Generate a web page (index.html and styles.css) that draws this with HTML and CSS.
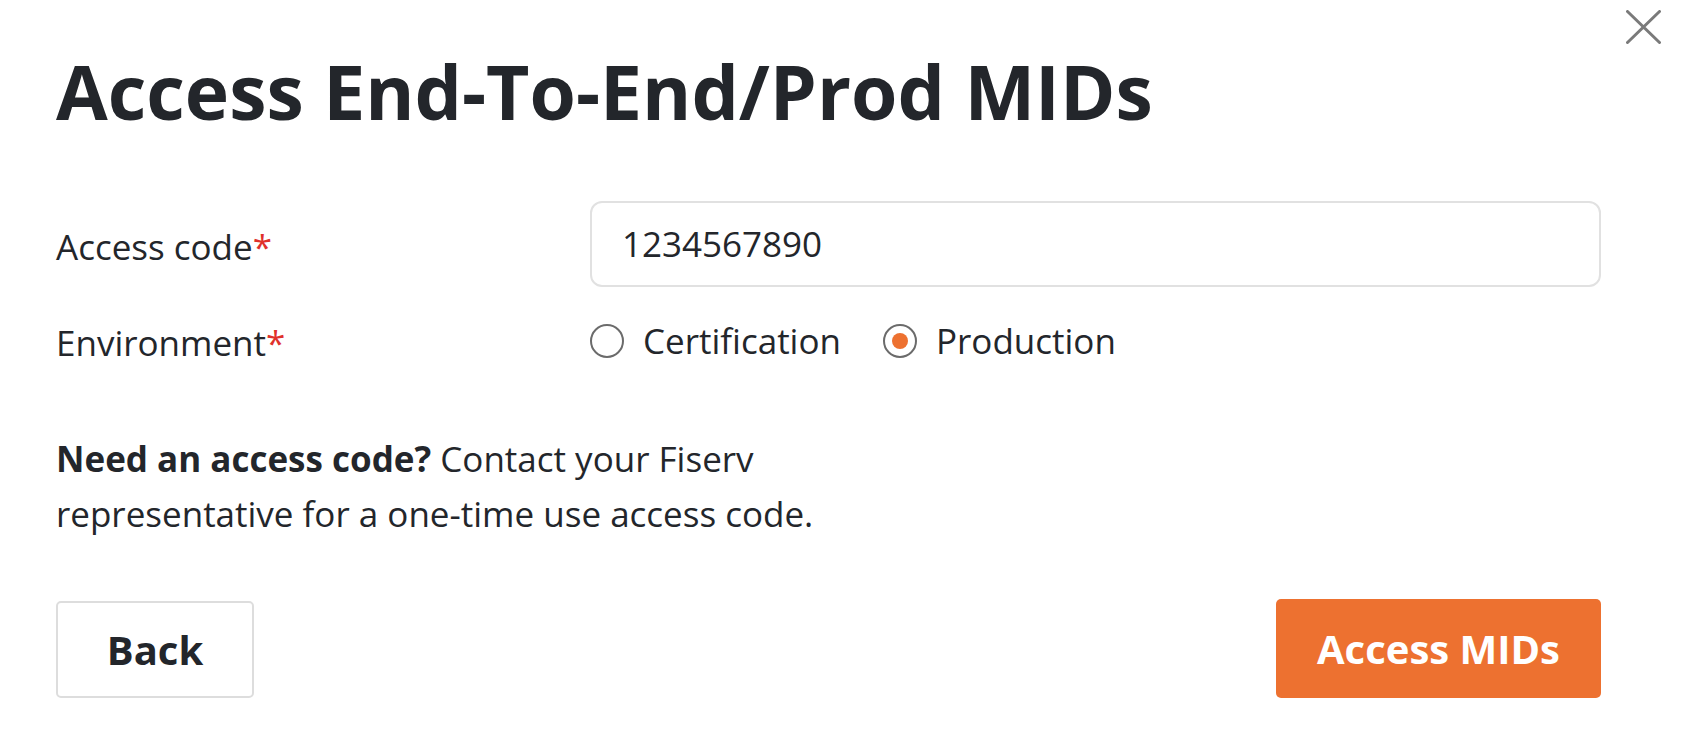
FILE: index.html
```html
<!DOCTYPE html>
<html lang="en">
<head>
<meta charset="utf-8">
<title>Access End-To-End/Prod MIDs</title>
<link rel="stylesheet" href="styles.css">
</head>
<body>
<div class="modal">
  <button class="close" aria-label="Close">
    <svg viewBox="0 0 35 34" width="35" height="34"><path d="M1.5 1.5 L33.5 32.5 M33.5 1.5 L1.5 32.5" stroke="#7a7a7a" stroke-width="3" fill="none" stroke-linecap="round"/></svg>
  </button>
  <h1 class="title">Access End-To-End/Prod MIDs</h1>
  <div class="form">
    <div class="row row-code">
      <label class="label">Access code<span class="req">*</span></label>
      <div class="input">1234567890</div>
    </div>
    <div class="row row-env">
      <span class="label">Environment<span class="req">*</span></span>
      <div class="radios">
        <span class="radio"><span class="circle"></span>Certification</span>
        <span class="radio"><span class="circle checked"></span>Production</span>
      </div>
    </div>
  </div>
  <p class="help"><strong>Need an access code?</strong> Contact your Fiserv representative for a one-time use access code.</p>
  <div class="actions">
    <button class="btn btn-back">Back</button>
    <button class="btn btn-primary">Access MIDs</button>
  </div>
</div>
</body>
</html>
```

FILE: styles.css
```css
* { box-sizing: border-box; }
html, body { margin: 0; padding: 0; background: #fff; }
body {
  font-family: "Open Sans", "Noto Sans", sans-serif;
  color: #23262b;
  width: 1684px;
  height: 754px;
  overflow: hidden;
}
.modal {
  position: relative;
  padding: 54px 83px 0 56px;
  display: flex;
  flex-direction: column;
}
.close {
  position: absolute;
  top: 10px;
  right: 23px;
  width: 35px;
  height: 34px;
  padding: 0;
  border: 0;
  background: none;
  cursor: pointer;
}
.close svg { display: block; }
.title {
  margin: 0;
  font-size: 75px;
  line-height: 75px;
  font-weight: 700;
  color: #23262b;
}
.form {
  margin-top: 72px;
  display: flex;
  flex-direction: column;
  gap: 35px;
}
.row {
  display: grid;
  grid-template-columns: 534px 1fr;
  align-items: center;
}
.label {
  font-size: 35px;
  line-height: 35px;
  color: #23262b;
}
.row-code .label { padding-top: 4px; }
.row-env .label { padding-top: 3px; }
.req { color: #e0312b; }
.input {
  height: 86px;
  border: 2px solid #e1e1e1;
  border-radius: 12px;
  padding: 0 30px 2px;
  display: flex;
  align-items: center;
  font-size: 35px;
  color: #23262b;
}
.radios {
  display: flex;
  align-items: center;
  gap: 42px;
}
.radio {
  display: flex;
  align-items: center;
  gap: 19px;
  font-size: 35px;
  line-height: 34px;
}
.circle {
  width: 34px;
  height: 34px;
  border-radius: 50%;
  border: 2px solid #6b6b6b;
  display: flex;
  align-items: center;
  justify-content: center;
  flex: none;
}
.circle.checked::after {
  content: "";
  width: 16px;
  height: 16px;
  border-radius: 50%;
  background: #ed7130;
}
.help {
  margin: 71px 0 0;
  font-size: 35px;
  line-height: 55px;
  max-width: 800px;
  color: #23262b;
}
.help strong { font-weight: 700; }
.actions {
  margin-top: 58px;
  display: flex;
  justify-content: space-between;
  align-items: flex-end;
}
.btn {
  font-family: "Open Sans", "Noto Sans", sans-serif;
  font-weight: 700;
  font-size: 40px;
  cursor: pointer;
}
.btn-back {
  width: 198px;
  height: 97px;
  background: #fff;
  border: 2px solid #dddddd;
  border-radius: 5px;
  color: #23262b;
}
.btn-primary {
  width: 325px;
  height: 99px;
  background: #ed7130;
  border: 0;
  border-radius: 5px;
  color: #fff;
}
```
